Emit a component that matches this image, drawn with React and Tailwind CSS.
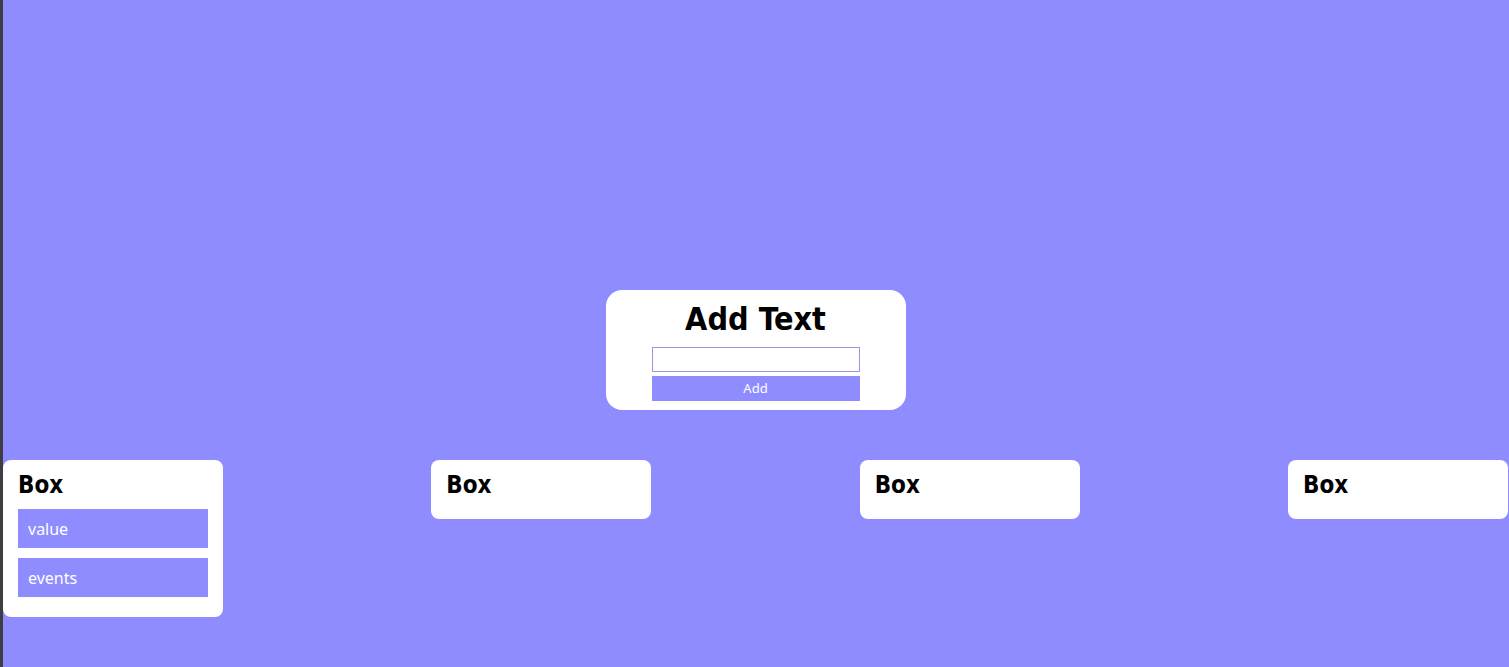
import React from "react";

const heading = { fontFamily: '"DejaVu Sans Condensed", "DejaVu Sans", sans-serif' };

function Box({ items = [] }) {
  return (
    <div className="w-[220px] bg-white rounded-[8px] px-[15px] pt-[12px] pb-[20px] flex flex-col">
      <h2 className="text-[24px] font-bold leading-[27px] text-black" style={heading}>Box</h2>
      {items.length > 0 && (
        <div className="mt-[10px] flex flex-col gap-[10px]">
          {items.map((it) => (
            <div
              key={it}
              className="h-[39px] bg-[#8f8cff] text-white text-[16px] flex items-center pl-[10px]"
              style={{ fontFamily: '"Noto Sans", "Open Sans", sans-serif' }}
            >
              {it}
            </div>
          ))}
        </div>
      )}
    </div>
  );
}

export default function App() {
  return (
    <div className="min-h-[667px] bg-[#8f8cff] border-l-[3px] border-[#3d3d42] flex flex-col pr-[1px]">
      <div className="mt-[290px] self-center w-[300px] h-[120px] bg-white rounded-[16px] flex flex-col items-center pt-[10px]">
        <h1 className="text-[32px] font-bold leading-[38px] text-black" style={heading}>Add Text</h1>
        <input
          type="text"
          className="mt-[9px] w-[208px] h-[25px] border border-[#9b98e0] bg-white outline-none"
        />
        <button
          className="mt-[4px] w-[208px] h-[25px] bg-[#8f8cff] text-white text-[13px] flex items-center justify-center"
          style={{ fontFamily: '"Noto Sans", "Liberation Sans", sans-serif' }}
        >
          Add
        </button>
      </div>
      <div className="mt-[50px] flex justify-between items-start">
        <Box items={["value", "events"]} />
        <Box />
        <Box />
        <Box />
      </div>
    </div>
  );
}
